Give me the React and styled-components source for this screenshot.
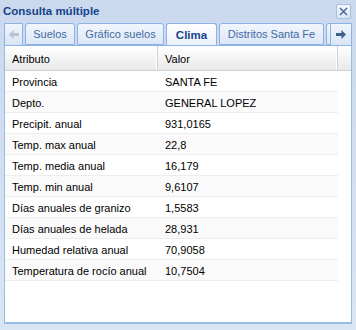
import React from "react";
import styled, { createGlobalStyle } from "styled-components";

const GlobalStyle = createGlobalStyle`
	body {
		margin: 0;
		font-family: "Liberation Sans", Arial, sans-serif;
		font-size: 11px;
	}
`;

const Window = styled.div`
	width: 356px;
	height: 330px;
	display: flex;
	flex-direction: column;
	background: linear-gradient(#cad9ed, #d3e0f2 60%, #dae5f4);
	box-sizing: border-box;
	overflow: hidden;
`;

const Header = styled.div`
	height: 23px;
	display: flex;
	align-items: center;
	justify-content: space-between;
	padding: 0 5px 1px 3px;
	box-sizing: border-box;
`;

const Title = styled.div`
	font-weight: bold;
	font-size: 11.5px;
	color: #15428b;
`;

const CloseTool = styled.div`
	width: 13px;
	height: 13px;
	border: 1px solid #a6bedf;
	border-radius: 2px;
	background: linear-gradient(#f3f7fd, #dbe6f5);
	display: flex;
	align-items: center;
	justify-content: center;
	margin-top: 1px;
`;

const TabPanel = styled.div`
	flex: 1;
	margin: 0 4px 6px 4px;
	display: flex;
	flex-direction: column;
`;

const TabStrip = styled.div`
	height: 23px;
	display: flex;
	align-items: flex-end;
	border-bottom: 1px solid #8db2e3;
	box-sizing: border-box;
`;

const Scroller = styled.div`
	width: ${p => p.width}px;
	height: 22px;
	box-sizing: border-box;
	border: 1px solid #8db2e3;
	border-bottom: none;
	background: linear-gradient(#f0f5fc, #d9e5f6);
	display: flex;
	align-items: center;
	justify-content: center;
	flex-shrink: 0;
`;

const TabTrack = styled.div`
	flex: 1;
	display: flex;
	align-items: flex-end;
	overflow: hidden;
	height: 22px;
`;

const Tab = styled.div`
	width: ${p => p.width}px;
	flex-shrink: 0;
	margin-left: 2px;
	height: ${p => (p.active ? 23 : 22)}px;
	margin-bottom: ${p => (p.active ? -1 : 0)}px;
	box-sizing: border-box;
	border: 1px solid #8db2e3;
	border-bottom: ${p => (p.active ? "none" : "1px solid #8db2e3")};
	border-radius: 3px 3px 0 0;
	background: ${p =>
		p.active
			? "linear-gradient(#ffffff, #f2f6fc 60%, #eaf1fb)"
			: "linear-gradient(#f2f6fd, #dce7f6)"};
	color: ${p => (p.active ? "#15428b" : "#416aa3")};
	font-weight: ${p => (p.active ? "bold" : "normal")};
	font-size: ${p => (p.active ? "11.5px" : "11px")};
	display: flex;
	align-items: center;
	justify-content: center;
	padding-bottom: ${p => (p.active ? 1 : 0)}px;
	white-space: nowrap;
	z-index: ${p => (p.active ? 1 : 0)};
`;

const Body = styled.div`
	flex: 1;
	background: #ffffff;
	border: 1px solid #99bbe8;
	border-top: none;
	border-bottom-width: 2px;
	display: flex;
	flex-direction: column;
`;

const GridHeader = styled.div`
	height: 25px;
	display: flex;
	box-sizing: border-box;
	border-bottom: 1px solid #d0d0d0;
	background: linear-gradient(#ffffff, #f4f4f4 50%, #e8e9eb);
`;

const HeaderCell = styled.div`
	width: ${p => p.width}px;
	flex-shrink: 0;
	box-sizing: border-box;
	padding: 1px 0 0 7px;
	display: flex;
	align-items: center;
	border-right: 1px solid #d0d0d0;
	box-shadow: inset -1px 0 0 #ffffff;
	color: #000;
`;

const HeaderFill = styled.div`
	flex: 1;
`;

const Row = styled.div`
	width: 333px;
	height: 21px;
	display: flex;
	box-sizing: border-box;
	border-bottom: 1px solid #ededed;
	background: ${p => (p.alt ? "#fafafa" : "#ffffff")};
`;

const Cell = styled.div`
	width: ${p => p.width}px;
	flex-shrink: 0;
	box-sizing: border-box;
	padding: 2px 0 0 7px;
	display: flex;
	align-items: center;
	color: #000;
	white-space: nowrap;
`;

const rows = [
	["Provincia", "SANTA FE"],
	["Depto.", "GENERAL LOPEZ"],
	["Precipit. anual", "931,0165"],
	["Temp. max anual", "22,8"],
	["Temp. media anual", "16,179"],
	["Temp. min anual", "9,6107"],
	["Días anuales de granizo", "1,5583"],
	["Días anuales de helada", "28,931"],
	["Humedad relativa anual", "70,9058"],
	["Temperatura de rocío anual", "10,7504"],
];

const tabs = [
	{ label: "Suelos", width: 50 },
	{ label: "Gráfico suelos", width: 87 },
	{ label: "Clima", width: 51, active: true },
	{ label: "Distritos Santa Fe", width: 105 },
	{ label: "", width: 20 },
];

const App = () => (
	<>
		<GlobalStyle />
		<Window>
			<Header>
				<Title>Consulta múltiple</Title>
				<CloseTool>
					<svg width="9" height="9" viewBox="0 0 9 9">
						<path d="M1 1 L8 8 M8 1 L1 8" stroke="#3d5e8f" strokeWidth="1.3" />
					</svg>
				</CloseTool>
			</Header>
			<TabPanel>
				<TabStrip>
					<Scroller width={19}>
						<svg width="10" height="9" viewBox="0 0 10 9">
							<path d="M0 4.5 L4.5 0 L4.5 3 L10 3 L10 6 L4.5 6 L4.5 9 Z" fill="#b4c3d6" />
						</svg>
					</Scroller>
					<TabTrack>
						{tabs.map(t => (
							<Tab key={t.label + t.width} width={t.width} active={t.active}>
								{t.label}
							</Tab>
						))}
					</TabTrack>
					<Scroller width={22}>
						<svg width="10" height="9" viewBox="0 0 10 9">
							<path d="M10 4.5 L5.5 0 L5.5 3 L0 3 L0 6 L5.5 6 L5.5 9 Z" fill="#3e5f89" />
						</svg>
					</Scroller>
				</TabStrip>
				<Body>
					<GridHeader>
						<HeaderCell width={153}>Atributo</HeaderCell>
						<HeaderCell width={180}>Valor</HeaderCell>
						<HeaderFill />
					</GridHeader>
					{rows.map(([name, value], i) => (
						<Row key={name} alt={i % 2 === 1}>
							<Cell width={153}>{name}</Cell>
							<Cell width={180}>{value}</Cell>
						</Row>
					))}
				</Body>
			</TabPanel>
		</Window>
	</>
);

export default App;
